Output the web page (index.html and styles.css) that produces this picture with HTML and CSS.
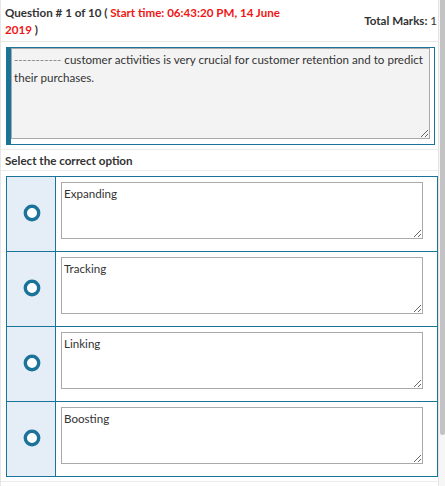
FILE: index.html
```html
<!DOCTYPE html>
<html>
<head>
<meta charset="utf-8">
<link rel="stylesheet" href="styles.css">
</head>
<body>
<div class="page">
  <div class="panel">
    <div class="header">
      <div class="qtitle">Question # 1 of 10 ( <span class="red">Start time: 06:43:20 PM, 14 June 2019</span> )</div>
      <div class="marks">Total Marks: <span class="num">1</span></div>
    </div>
    <div class="qsection">
      <div class="qbox">
        <div class="qtext"><span class="dash">-----------</span> customer activities is very crucial for customer retention and to predict their purchases.</div>
      </div>
    </div>
    <div class="select">Select the correct option</div>
    <div class="options">
      <div class="table">
        <div class="row">
          <div class="radio-cell"><svg class="radio" width="18" height="18" viewBox="0 0 18 18"><circle cx="9" cy="9" r="6.7" fill="#fff" stroke="#1b7399" stroke-width="3.4"/></svg></div>
          <div class="ans-cell"><textarea class="ans" readonly>Expanding</textarea></div>
        </div>
        <div class="row">
          <div class="radio-cell"><svg class="radio" width="18" height="18" viewBox="0 0 18 18"><circle cx="9" cy="9" r="6.7" fill="#fff" stroke="#1b7399" stroke-width="3.4"/></svg></div>
          <div class="ans-cell"><textarea class="ans" readonly>Tracking</textarea></div>
        </div>
        <div class="row">
          <div class="radio-cell"><svg class="radio" width="18" height="18" viewBox="0 0 18 18"><circle cx="9" cy="9" r="6.7" fill="#fff" stroke="#1b7399" stroke-width="3.4"/></svg></div>
          <div class="ans-cell"><textarea class="ans" readonly>Linking</textarea></div>
        </div>
        <div class="row">
          <div class="radio-cell"><svg class="radio" width="18" height="18" viewBox="0 0 18 18"><circle cx="9" cy="9" r="6.7" fill="#fff" stroke="#1b7399" stroke-width="3.4"/></svg></div>
          <div class="ans-cell"><textarea class="ans" readonly>Boosting</textarea></div>
        </div>
      </div>
    </div>
  </div>
  <div class="scrollbar"><div class="thumb"></div></div>
</div>
</body>
</html>
```
FILE: styles.css
```css
html, body {
  margin: 0;
  height: 100%;
  overflow: hidden;
}
body {
  font-family: Lato, "Liberation Sans", sans-serif;
  color: #333;
  background: #fff;
}
.page {
  display: flex;
  height: 486px;
}
.panel {
  width: 437px;
  border-left: 1px solid #e6e6e6;
}
.scrollbar {
  width: 6px;
  border-left: 1px solid #e4e4e4;
  background: #f6f6f6;
}
.thumb {
  margin-left: 1px;
  width: 5px;
  height: 435px;
  background: #c3c3c3;
  border-radius: 0 0 3px 3px;
}
.header {
  display: flex;
  justify-content: space-between;
  align-items: center;
  padding: 3px 1px 3px 4px;
  height: 35px;
  border-bottom: 1px solid #e8e8e8;
}
.qtitle {
  width: 285px;
  font-size: 11.6px;
  font-weight: 700;
  line-height: 17px;
  color: #333;
}
.red {
  color: #f01515;
}
.marks {
  font-size: 11.6px;
  font-weight: 700;
  color: #333;
}
.num {
  font-weight: 400;
}
.qsection {
  padding: 5px 3px 4px 5px;
  border-bottom: 1px solid #ececec;
}
.qbox {
  border: 1px solid #1b7399;
  border-left: 5px solid #1b7399;
  padding: 0 4px 5px 0;
}
.qtext {
  height: 85px;
  border: 1px solid #a9a9a9;
  background: #f3f3f3;
  padding: 2px 2px;
  font-size: 11.6px;
  line-height: 18px;
  color: #333;
  resize: both;
  overflow: hidden;
}
.dash {
  color: #888;
}
.select {
  height: 20px;
  line-height: 22px;
  padding-left: 4px;
  font-size: 11.6px;
  font-weight: 700;
  color: #333;
  border-bottom: 1px solid #ececec;
}
.options {
  padding: 5px 0 4px 5px;
  border-bottom: 1px solid #ececec;
}
.table {
  border: 1px solid #1b7399;
  border-bottom: 0;
}
.row {
  display: flex;
  height: 74px;
  border-bottom: 1px solid #1b7399;
}
.radio-cell {
  width: 49px;
  background: #e5edf7;
  border-right: 1px solid #1b7399;
  display: flex;
  align-items: center;
  justify-content: center;
  padding-bottom: 3px;
  box-sizing: border-box;
}
.radio {
  display: block;
  margin-left: 1px;
}
.ans-cell {
  flex: 1;
  padding: 5px 0 0 5px;
}
.ans {
  display: block;
  width: 362px;
  height: 57px;
  box-sizing: border-box;
  border: 1px solid #a9a9a9;
  border-radius: 0;
  padding: 2px 2px;
  margin: 0;
  font-family: Lato, "Liberation Sans", sans-serif;
  font-size: 11.6px;
  line-height: 18px;
  color: #333;
  background: #fff;
  outline: none;
}
```
